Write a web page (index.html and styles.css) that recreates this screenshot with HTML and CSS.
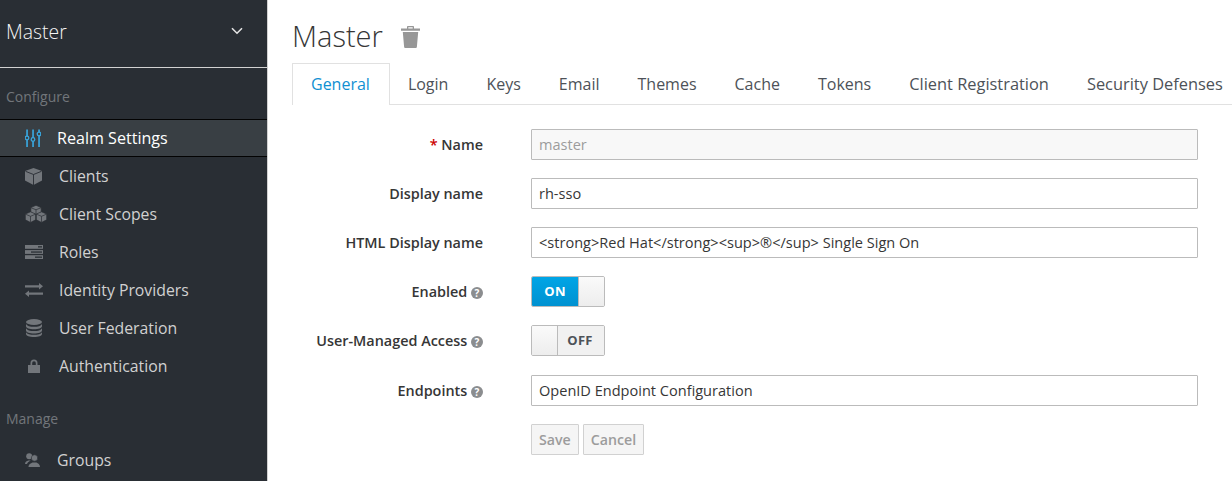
FILE: index.html
```html
<!DOCTYPE html>
<html lang="en">
<head>
<meta charset="utf-8">
<title>Master</title>
<link rel="stylesheet" href="styles.css">
</head>
<body>
<div class="app">
  <aside class="sidebar">
    <div class="realm">
      <span>Master</span>
      <svg class="chev" width="12" height="8" viewBox="0 0 12 8"><path d="M1 1.200l5 5 5-5" fill="none" stroke="#e4e4e4" stroke-width="1.600"/></svg>
    </div>
    <h2 class="group first">Configure</h2>
    <ul class="nav">
      <li class="item active">
        <span class="slot"><svg width="16" height="18" viewBox="0 0 16 18"><g fill="#39a5dc"><rect x="1.200" y="0.500" width="1.700" height="17.500"/><rect x="7.200" y="0.500" width="1.700" height="17.500"/><rect x="13.200" y="0.500" width="1.700" height="17.500"/></g><g fill="#393f44" stroke="#39a5dc" stroke-width="1.300"><circle cx="2" cy="9" r="1.800"/><circle cx="8" cy="10.500" r="1.800"/><circle cx="14" cy="5" r="1.800"/></g></svg></span>
        <span>Realm Settings</span>
      </li>
      <li class="item">
        <span class="slot"><svg width="17" height="17" viewBox="0 0 17 17"><path d="M8.500 0L17 3v9.500L8.500 17 0 12.500V3z" fill="#72767b"/><path d="M0.500 3.300L8.500 6.500l8-3.200M8.500 6.500V17" fill="none" stroke="#292e34" stroke-width=".9"/></svg></span>
        <span>Clients</span>
      </li>
      <li class="item">
        <span class="slot"><svg width="22" height="18" viewBox="0 0 22 18"><g fill="#72767b" stroke="#292e34" stroke-width=".7"><path d="M11 .3l5.200 2.200v5L11 9.700 5.800 7.500v-5z"/><path d="M5.500 6.800l5.200 2.200v5.800L5.500 17.500.3 14.800V9z"/><path d="M16.500 6.800l5.200 2.200v5.800l-5.200 2.700-5.200-2.700V9z"/></g><path d="M6 2.700l5 2.100 5-2.100M.5 9.200l5 2.100 5-2.100M11.500 9.200l5 2.100 5-2.100M11 4.800v4.500M5.500 11.300v6M16.500 11.300v6" fill="none" stroke="#292e34" stroke-width=".7"/></svg></span>
        <span>Client Scopes</span>
      </li>
      <li class="item">
        <span class="slot"><svg width="18" height="14" viewBox="0 0 18 14"><g fill="#72767b"><rect width="18" height="3.800"/><rect y="5.100" width="18" height="3.800"/><rect y="10.200" width="18" height="3.800"/></g><g fill="#292e34"><rect x="13" y="1.200" width="4" height="1.300"/><rect x="6" y="6.400" width="11" height="1.300"/><rect x="10" y="11.500" width="7" height="1.300"/></g></svg></span>
        <span>Roles</span>
      </li>
      <li class="item">
        <span class="slot"><svg width="18" height="14" viewBox="0 0 18 14"><g fill="#72767b"><path d="M0 2.300h14V0l4 3.300-4 3.200V4.400H0z"/><path d="M18 9.600H4V7.400L0 10.700 4 14v-2.300h14z"/></g></svg></span>
        <span>Identity Providers</span>
      </li>
      <li class="item">
        <span class="slot"><svg class="ico-db" width="16" height="18" viewBox="0 0 16 18"><g fill="#72767b"><ellipse cx="8" cy="3" rx="8" ry="3"/><path d="M0 5c1 2 4 2.800 8 2.800S15 7 16 5v2.300c0 1.700-3.600 3-8 3s-8-1.300-8-3z"/><path d="M0 9.300c1 2 4 2.800 8 2.800s7-.8 8-2.800v2.200c0 1.700-3.600 3-8 3s-8-1.300-8-3z"/><path d="M0 13.200c1 2 4 2.500 8 2.500s7-.5 8-2.500V15c0 1.700-3.600 3-8 3s-8-1.300-8-3z"/></g></svg></span>
        <span>User Federation</span>
      </li>
      <li class="item">
        <span class="slot"><svg class="ico-lock" width="12" height="14" viewBox="0 0 12 14"><path fill="#72767b" d="M2.500 6V4a3.500 3.500 0 0 1 7 0v2H12v8H0V6zm1.700 0h3.600V4a1.800 1.800 0 0 0-3.600 0z"/></svg></span>
        <span>Authentication</span>
      </li>
    </ul>
    <h2 class="group second">Manage</h2>
    <ul class="nav">
      <li class="item shifted">
        <span class="slot"><svg width="15" height="14" viewBox="0 0 15 14"><g fill="#72767b"><circle cx="4.200" cy="3.300" r="3"/><path d="M0 11c0-2.200 2-3 3.200-3.500h2.500c-1.500 1-3.400 2-3.700 3.500z"/><circle cx="9.500" cy="5" r="3.200" stroke="#292e34" stroke-width=".6"/><path d="M3.500 14c0-2.800 2.500-3.700 4-4.500h4c1.500.8 3.500 1.700 3.500 4.500z"/></g></svg></span>
        <span>Groups</span>
      </li>
    </ul>
  </aside>
  <main class="main">
    <header class="title">
      <h1>Master</h1>
      <svg class="trash" width="19" height="22" viewBox="0 0 19 22"><path fill="#979797" d="M6 2.500V.8C6 .3 6.300 0 6.800 0h5.400c.5 0 .8.300.8.800v1.700h6v2.300H0V2.500zm1.300 0h4.400V1.200H7.300zM1.800 6h15.400l-1.300 14.700c-.1.800-.5 1.300-1.300 1.300H4.400c-.8 0-1.200-.5-1.300-1.300z"/></svg>
    </header>
    <nav class="tabs">
      <a class="tab current">General</a>
      <a class="tab">Login</a>
      <a class="tab">Keys</a>
      <a class="tab">Email</a>
      <a class="tab">Themes</a>
      <a class="tab">Cache</a>
      <a class="tab">Tokens</a>
      <a class="tab wide">Client Registration</a>
      <a class="tab wide">Security Defenses</a>
    </nav>
    <form class="form">
      <div class="row">
        <label class="label"><span class="req">*</span> Name</label>
        <input class="field disabled" value="master" disabled>
      </div>
      <div class="row">
        <label class="label">Display name</label>
        <input class="field" value="rh-sso">
      </div>
      <div class="row">
        <label class="label">HTML Display name</label>
        <input class="field" value="&lt;strong&gt;Red Hat&lt;/strong&gt;&lt;sup&gt;®&lt;/sup&gt; Single Sign On">
      </div>
      <div class="row">
        <label class="label">Enabled <i class="help">?</i></label>
        <div class="switch"><span class="on">ON</span><span class="knob knob-right"></span></div>
      </div>
      <div class="row">
        <label class="label">User-Managed Access <i class="help">?</i></label>
        <div class="switch"><span class="knob knob-left"></span><span class="off">OFF</span></div>
      </div>
      <div class="row row-end">
        <label class="label">Endpoints <i class="help">?</i></label>
        <input class="field" value="OpenID Endpoint Configuration">
      </div>
      <div class="row">
        <span class="label"></span>
        <div class="actions"><button type="button" class="btn">Save</button><button type="button" class="btn">Cancel</button></div>
      </div>
    </form>
  </main>
</div>
</body>
</html>
```
FILE: styles.css
```css
* { box-sizing: border-box; }
html, body { margin: 0; height: 100%; overflow: hidden; }
body { font-family: "Open Sans", "Liberation Sans", sans-serif; background: #fff; color: #363636; }
.app { display: flex; width: 1232px; height: 481px; overflow: hidden; }

.sidebar { flex: 0 0 268px; height: 481px; background: #292e34; border-right: 1px solid #d1d1d1; overflow: hidden; }
.realm { height: 68px; border-bottom: 1px solid #d1d1d1; display: flex; align-items: center; justify-content: space-between; padding: 0 24px 5px 6px; font-size: 19.400px; font-weight: 300; color: #f5f5f5; }
.chev { display: block; }
.group { margin: 0; padding-left: 6px; font-size: 14px; font-weight: 400; line-height: 20px; color: #72767b; }
.group.first { padding-top: 19px; height: 51px; }
.group.second { height: 32px; margin-top: 24px; }
.nav { list-style: none; margin: 0; padding: 0; }
.item { height: 38px; display: flex; align-items: center; padding-left: 25px; font-size: 15.800px; color: #d1d1d1; }
.slot { flex: 0 0 34px; display: flex; align-items: center; }
.ico-db { margin-left: 1px; }
.ico-lock { margin-left: 3px; }
.item.active { background: #393f44; border-top: 1px solid #030303; border-bottom: 1px solid #030303; color: #fff; font-size: 16.100px; }
.item.active .slot, .item.shifted .slot { flex-basis: 32px; }

.main { flex: 1; min-width: 0; padding-left: 24px; }
.title { height: 63px; display: flex; align-items: center; padding-top: 9px; }
.title h1 { margin: 0; font-size: 29px; font-weight: 300; line-height: 36px; color: #363636; }
.trash { margin-left: 18px; margin-top: 1px; }
.tabs { display: flex; height: 42px; border-bottom: 1px solid #e1e1e1; white-space: nowrap; }
.tab { display: block; height: 42px; padding: 0 18px; line-height: 41px; font-size: 16px; color: #4d5258; border: 1px solid transparent; border-bottom: 0; }
.tab.wide { font-size: 16.400px; line-height: 39px; }
.tab.current { color: #1090d2; background: #fff; border-color: #e1e1e1; border-radius: 1px 1px 0 0; padding-right: 19px; margin-right: -1px; }

.form { padding-top: 24px; width: 906px; }
.row { display: flex; align-items: center; height: 31px; margin-bottom: 18px; }
.row-end { margin-top: 19px; }
.label { flex: 0 0 191px; text-align: right; font-size: 14.400px; font-weight: 600; color: #363636; white-space: nowrap; }
.req { color: #c00; }
.help { display: inline-block; width: 12px; height: 12px; border-radius: 50%; background: #8b8d8f; color: #fff; font-size: 10px; font-weight: 700; font-style: normal; line-height: 12px; text-align: center; }
.field { flex: 0 0 667px; margin-left: 48px; height: 31px; padding: 0 7px 2px; border: 1px solid #bbb; border-radius: 1px; background: #fff; font: 400 14.550px "Open Sans", sans-serif; color: #363636; }
.field.disabled { background: #f8f8f8; color: #9c9c9c; }
.switch { display: flex; margin-left: 48px; width: 74px; height: 31px; border: 1px solid #bbb; border-radius: 2px; font-size: 13px; font-weight: 700; letter-spacing: .3px; overflow: hidden; }
.on { width: 46px; background: linear-gradient(#00a5e6, #0091d0); color: #fff; text-align: center; line-height: 29px; }
.off { flex: 1; background: #f1f1f1; color: #4d5258; text-align: center; line-height: 29px; padding-right: 2px; }
.knob { background: linear-gradient(#fafafa, #ededed); }
.knob-right { flex: 1; border-left: 1px solid #bbb; }
.knob-left { width: 26px; border-right: 1px solid #bbb; }
.actions { display: flex; gap: 4px; margin-left: 48px; }
.btn { height: 31px; padding: 0 7px; border: 1px solid #d1d1d1; border-radius: 1px; background: #f5f5f5; color: #9c9c9c; font: 600 14.200px "Open Sans", sans-serif; }
```
